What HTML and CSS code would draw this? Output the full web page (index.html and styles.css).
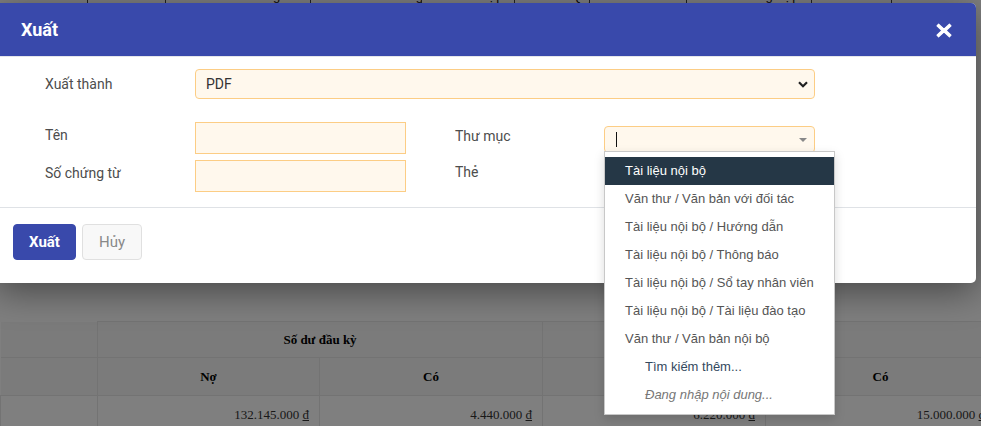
FILE: index.html
```html
<!DOCTYPE html>
<html lang="vi">
<head>
<meta charset="utf-8">
<title>Xuất</title>
<link rel="stylesheet" href="styles.css">
</head>
<body>
<div class="page">
  <div class="tabs">
    <div class="tab"><span>Mã tài khoản</span></div>
    <div class="tab"><span>Tên tài</span></div>
    <div class="tab"><span>Kế toán Mua hàng</span></div>
    <div class="tab"><span>Kế toán Bán hàng</span></div>
    <div class="tab"><span>Kế toán Hợp đồng</span></div>
    <div class="tab"><span>Kế toán Quỹ</span></div>
    <div class="tab"><span>Kế toán Kho</span></div>
    <div class="tab"><span>Kế toán Tổng hợp</span></div>
    <div class="tab"><span>Kế toán</span></div>
  </div>
  <div class="spacer"></div>
  <table class="report">
    <colgroup>
      <col class="c1"><col class="c2"><col class="c3"><col class="c4"><col class="c5">
    </colgroup>
    <tr class="r1">
      <th class="blank"></th>
      <th colspan="2">Số dư đầu kỳ</th>
      <th colspan="2">Phát sinh trong kỳ</th>
    </tr>
    <tr class="r2">
      <th class="blank"></th>
      <th>Nợ</th><th>Có</th><th>Nợ</th><th>Có</th>
    </tr>
    <tr class="r3">
      <td></td>
      <td class="num">132.145.000 <u>đ</u></td>
      <td class="num">4.440.000 <u>đ</u></td>
      <td class="num">6.220.000 <u>đ</u></td>
      <td class="num">15.000.000 <u>đ</u></td>
    </tr>
  </table>

  <div class="backdrop"></div>

  <div class="modal">
    <div class="modal-header">
      <h4 class="modal-title">Xuất</h4>
      <svg class="close" width="16" height="15" viewBox="0 0 16 15" aria-label="Đóng">
        <path d="M2.6 1.2 L8 6.1 L13.4 1.2 L15 2.8 L10 7.5 L15 12.2 L13.4 13.8 L8 8.9 L2.6 13.8 L1 12.2 L6 7.5 L1 2.8 Z" fill="#fff" stroke="#fff" stroke-width="1.2" stroke-linejoin="round"/>
      </svg>
    </div>
    <div class="modal-body">
      <div class="row-full">
        <label class="lbl">Xuất thành</label>
        <div class="select">
          <span>PDF</span>
          <svg width="10" height="7" viewBox="0 0 10 7"><path d="M1 1.2 L5 5.2 L9 1.2" fill="none" stroke="#222" stroke-width="2.2"/></svg>
        </div>
      </div>
      <div class="grid">
        <label class="lbl">Tên</label>
        <div class="field"></div>
        <label class="lbl right">Thư mục</label>
        <div class="combo">
          <span class="cursor"></span>
          <span class="tri"></span>
        </div>
        <label class="lbl">Số chứng từ</label>
        <div class="field"></div>
        <label class="lbl right tag">Thẻ</label>
        <div></div>
      </div>
    </div>
    <div class="modal-footer">
      <button class="btn primary">Xuất</button>
      <button class="btn cancel">Hủy</button>
    </div>
  </div>

  <ul class="menu">
    <li class="item active">Tài liệu nội bộ</li>
    <li class="item">Văn thư / Văn bản với đối tác</li>
    <li class="item">Tài liệu nội bộ / Hướng dẫn</li>
    <li class="item">Tài liệu nội bộ / Thông báo</li>
    <li class="item">Tài liệu nội bộ / Sổ tay nhân viên</li>
    <li class="item">Tài liệu nội bộ / Tài liệu đào tạo</li>
    <li class="item">Văn thư / Văn bản nội bộ</li>
    <li class="item more">Tìm kiếm thêm...</li>
    <li class="item loading">Đang nhập nội dung...</li>
  </ul>
</div>
</body>
</html>
```
FILE: styles.css
```css
* { box-sizing: border-box; }
html, body { margin: 0; padding: 0; }
body { font-family: Roboto, "Noto Sans", sans-serif; background: #fff; }

.page {
  position: relative;
  width: 981px;
  height: 426px;
  overflow: hidden;
  background: #fff;
}

/* background page */
.tabs {
  display: flex;
  height: 3px;
  overflow: hidden;
  background: #fff;
}
.tab {
  height: 3px;
  overflow: hidden;
  padding: 0 8px;
  border-right: 1px solid #444;
  font-family: "Liberation Sans", sans-serif;
  font-size: 13px;
  color: #111;
  white-space: nowrap;
}
.tab span { display: block; margin-top: -11px; line-height: 14px; }
.tab:nth-child(1) { width: 88px; }
.tab:nth-child(2) { width: 78px; }
.tab:nth-child(3) { width: 145px; }
.tab:nth-child(4) { width: 111px; }
.tab:nth-child(5) { width: 93px; }
.tab:nth-child(6) { width: 75px; }
.tab:nth-child(7) { width: 97px; }
.tab:nth-child(8) { width: 125px; }
.tab:nth-child(9) { width: 80px; }

.spacer { height: 318px; }

.report {
  border-collapse: collapse;
  table-layout: fixed;
  width: 1110px;
  font-family: "Liberation Serif", serif;
  font-size: 13px;
  color: #000;
}
.report col.c1 { width: 97px; }
.report col.c2 { width: 222px; }
.report col.c3 { width: 223px; }
.report col.c4 { width: 223px; }
.report col.c5 { width: 345px; }
.report th, .report td {
  border: 1px solid #e6e6e6;
  padding: 0 10px;
}
.report th { font-weight: bold; text-align: center; background: #f7f7f7; }
.report th.blank { background: #f7f7f7; border-top-color: transparent; border-left: none; }
.report tr.r1 { height: 36px; }
.report tr.r2 { height: 38px; }
.report tr.r3 { height: 38px; }
.report td { background: #fff; color: #333; }
.report td.num { text-align: right; }
.report col.c5 + * {}
.report tr.r3 td:last-child { padding-right: 125px; }
.report th:last-child { padding-right: 125px; }

.backdrop {
  position: absolute;
  inset: 0;
  background: rgba(0, 0, 0, 0.5);
}

/* modal */
.modal {
  position: absolute;
  left: -4px;
  top: 3px;
  width: 980px;
  height: 280px;
  background: #fff;
  border-radius: 5px;
  box-shadow: 0 8px 36px rgba(0, 0, 0, 0.45);
  display: flex;
  flex-direction: column;
  overflow: hidden;
}
.modal-header {
  height: 54px;
  background: #3949ab;
  border-bottom: 1px solid #e4e6ea;
  display: flex;
  align-items: center;
  justify-content: space-between;
  padding: 0 24px 0 25px;
}
.modal-title {
  margin: 0;
  color: #fff;
  font-size: 18px;
  font-weight: 700;
  line-height: 22px;
  margin-top: 1px;
}
.close { display: block; margin-top: 1px; }

.modal-body {
  padding: 12px 0 15px 49px;
  border-bottom: 1px solid #dfe2e6;
}
.lbl {
  font-size: 14px;
  color: #4d4d4d;
  line-height: 20px;
}
.row-full {
  display: grid;
  grid-template-columns: 150px 620px;
  align-items: center;
  height: 30px;
}
.select {
  height: 30px;
  background: #fff8ed;
  border: 1px solid #fccd85;
  border-radius: 4px;
  display: flex;
  align-items: center;
  justify-content: space-between;
  padding: 0 6px 0 10px;
  font-size: 14px;
  color: #333;
}
.select svg { display: block; margin-top: 1px; }

.grid {
  margin-top: 23px;
  display: grid;
  grid-template-columns: 150px 211px 198px 211px;
  grid-template-rows: 32px 32px;
  row-gap: 6px;
}
.grid .lbl { align-self: start; padding-top: 3px; }
.grid .lbl.right { padding-left: 49px; padding-top: 4px; }
.grid .lbl.tag { padding-top: 2px; }
.field {
  height: 32px;
  background: #fff8ed;
  border: 1px solid #fccd85;
}
.combo {
  align-self: center;
  height: 27px;
  margin-top: 3px;
  background: #fff8ed;
  border: 1px solid #fccd85;
  border-radius: 4px;
  display: flex;
  align-items: center;
  justify-content: space-between;
  padding: 0 7px 0 11px;
}
.cursor { width: 1px; height: 15px; background: #111; }
.tri {
  width: 0; height: 0;
  border-left: 4px solid transparent;
  border-right: 4px solid transparent;
  border-top: 4px solid #888;
}

.modal-footer {
  display: flex;
  gap: 6px;
  padding: 16px 0 0 17px;
}
.btn {
  height: 36px;
  border-radius: 4px;
  font-family: Roboto, sans-serif;
  font-size: 15px;
  padding: 0;
  cursor: pointer;
}
.btn.primary {
  width: 63px;
  background: #3949ab;
  border: 1px solid #3949ab;
  color: #fff;
  font-weight: 700;
}
.btn.cancel {
  width: 60px;
  background: #f8f8f8;
  border: 1px solid #e0e0e0;
  color: #888;
}

/* dropdown menu */
.menu {
  position: absolute;
  left: 604px;
  top: 151px;
  width: 231px;
  margin: 0;
  padding: 5px 0;
  list-style: none;
  background: #fff;
  border: 1px solid #c8c8c8;
  box-shadow: 0 4px 10px rgba(0, 0, 0, 0.15);
  font-family: "Liberation Sans", Arial, sans-serif;
  font-size: 13px;
}
.item {
  height: 28px;
  line-height: 28px;
  padding-left: 20px;
  color: #555;
  white-space: nowrap;
}
.item.active { background: #253746; color: #fff; }
.item.more { padding-left: 40px; color: #34495e; }
.item.loading { padding-left: 40px; color: #777; font-style: italic; }
```
